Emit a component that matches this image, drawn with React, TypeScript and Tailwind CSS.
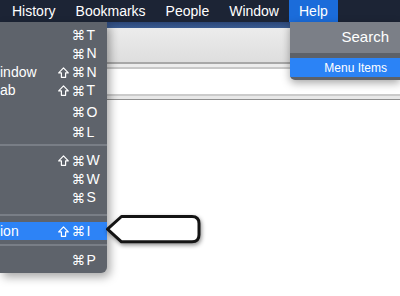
import React from 'react';

type Row = { label?: string; shift?: boolean; k: string; h: string; active?: boolean };

const menuBar = ['History', 'Bookmarks', 'People', 'Window'];

// seta do Shift em contorno, como no menu do macOS
const ShiftIcon = () => (
  <svg width="11" height="11" viewBox="0 0 11 11" className="mr-[3px]">
    <path
      d="M5.5 0.9 L10.3 5.9 L7.6 5.9 L7.6 10.3 L3.4 10.3 L3.4 5.9 L0.7 5.9 Z"
      fill="none"
      stroke="#fff"
      strokeWidth="1.2"
      strokeLinejoin="round"
    />
  </svg>
);

const MenuRow: React.FC<{ row: Row }> = ({ row }) => (
  <div
    className={`flex items-center text-[14px] text-white ${row.h} ${
      row.active ? 'bg-[#2d83f6]' : ''
    }`}
  >
    <span className="flex-1 whitespace-nowrap">{row.label}</span>
    <span className="flex items-center justify-end">
      {row.shift && <ShiftIcon />}
      <span className="font-['DejaVu_Sans'] text-[13.5px]">⌘</span>
    </span>
    <span className="w-[22px] pl-[1.5px]">{row.k}</span>
  </div>
);

const Separator: React.FC<{ pad: string }> = ({ pad }) => (
  <div className={pad}>
    <div className="h-[2px] bg-[#797e86]" />
  </div>
);

export default function App() {
  return (
    <div className="relative w-[400px] h-[296px] overflow-hidden bg-white font-['Liberation_Sans',sans-serif]">
      {/* barra de menus do sistema */}
      <nav className="flex h-[22px] items-stretch bg-[#1c2435] pl-[2px] text-[14px] text-white">
        {menuBar.map(item => (
          <span key={item} className="flex items-center px-[10px]">
            {item}
          </span>
        ))}
        <span className="flex items-center bg-[#1b6cda] px-[10px]">Help</span>
      </nav>

      {/* janela do navegador por trás dos menus */}
      <div className="h-[6px] bg-gradient-to-b from-[#2b4677] to-[#3a5b90]" />
      <div className="h-[34px] bg-gradient-to-b from-[#ececec] to-[#dedede]" />
      <div className="h-[2px] bg-[#a7a7a7]" />
      <div className="h-[3px] bg-[#ececec]" />
      <div className="h-[2px] bg-[#c8c8c8]" />
      <div className="h-[25px] bg-white" />
      <div className="h-[2px] bg-[#cbcbcb]" />
      <div className="h-[3px] bg-[#e8e8e8]" />
      <div className="h-[1px] bg-[#8f8f8f]" />

      {/* menu File (cortado à esquerda) */}
      <div className="absolute left-0 top-[22px] w-[107px] rounded-br-[6px] bg-[#5e636b] pb-[3px] pt-[4px] shadow-[3px_4px_10px_rgba(0,0,0,0.35)]">
        <MenuRow row={{ k: 'T', h: 'h-[18.5px]' }} />
        <MenuRow row={{ k: 'N', h: 'h-[18.5px]' }} />
        <MenuRow row={{ label: 'indow', shift: true, k: 'N', h: 'h-[18.5px]' }} />
        <MenuRow row={{ label: 'ab', shift: true, k: 'T', h: 'h-[18.5px]' }} />
        <div className="mt-[2px]">
          <MenuRow row={{ k: 'O', h: 'h-[20px]' }} />
          <MenuRow row={{ k: 'L', h: 'h-[20px]' }} />
        </div>
        <Separator pad="pt-[2px] pb-[4px]" />
        <div className="pt-[1.5px]">
          <MenuRow row={{ shift: true, k: 'W', h: 'h-[18.5px]' }} />
          <MenuRow row={{ k: 'W', h: 'h-[18.5px]' }} />
          <MenuRow row={{ k: 'S', h: 'h-[18.5px]' }} />
        </div>
        <Separator pad="pt-[7px] pb-[6px]" />
        <MenuRow row={{ label: 'ion', shift: true, k: 'I', h: 'h-[18px]', active: true }} />
        <Separator pad="pt-[4px] pb-[4px]" />
        <MenuRow row={{ k: 'P', h: 'h-[20px]' }} />
      </div>

      {/* menu Help */}
      <div className="absolute left-[290px] top-[22px] w-[110px] overflow-hidden rounded-bl-[5px] bg-[#5d6168] pb-[3px] text-white shadow-[0_3px_8px_rgba(0,0,0,0.35)]">
        <div className="flex h-[31px] items-center justify-end bg-[#7b7f87] pr-[11px] text-[15px]">
          Search
        </div>
        <div className="mt-[5px] flex h-[19px] items-center justify-end bg-[#2b83f6] pr-[13px] text-[12px]">
          Menu Items
        </div>
      </div>

      {/* balão indicador */}
      <svg
        className="absolute left-[100px] top-[210px] drop-shadow-[1px_2px_2px_rgba(0,0,0,0.45)]"
        width="106"
        height="38"
        viewBox="0 0 106 38"
      >
        <path
          d="M7.5 19.2 L21.5 6.5 L92 6.5 Q99 6.5 99 13.5 L99 24.8 Q99 31.8 92 31.8 L21.5 31.8 Z"
          fill="#fff"
          stroke="#141414"
          strokeWidth="3"
          strokeLinejoin="round"
        />
      </svg>
    </div>
  );
}
